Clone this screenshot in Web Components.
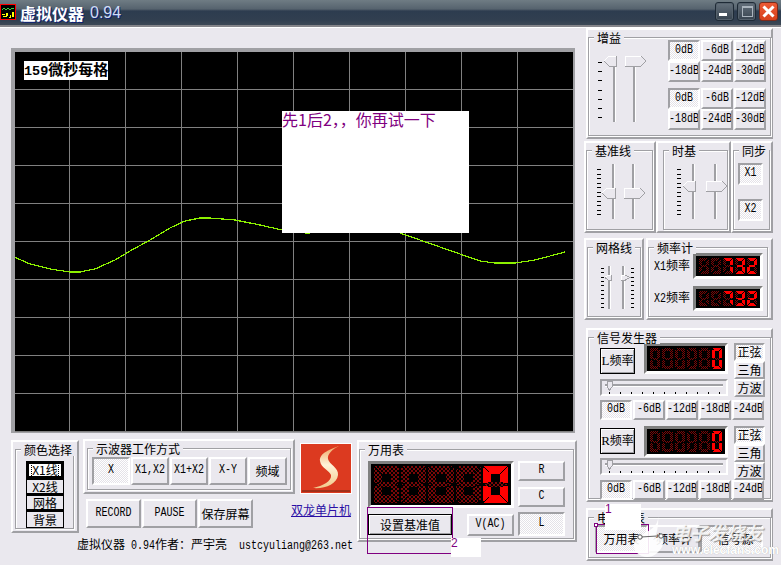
<!DOCTYPE html>
<html lang="zh">
<head>
<meta charset="utf-8">
<title>虚拟仪器 0.94</title>
<style>
  html, body { margin: 0; height: 100%; overflow: hidden; background: #eae8ee; }
  body { font: 12px/14px "Noto Sans CJK SC", "Liberation Sans", sans-serif; color: #000; }
  .row { display: flex; align-items: flex-start; }
  .col { display: flex; flex-direction: column; align-items: flex-start; }
  .m { font: 10px/14px "Liberation Mono", "Noto Sans CJK SC", monospace; display: inline-block; transform: scaleY(1.2); white-space: pre; }
  .main { display: flex; align-items: flex-start; padding-left: 11px; gap: 7px; }
  .left { width: 566px; padding-top: 21px; }
  .right { width: 191px; padding-top: 1px; }
  .footer { padding-left: 66px; line-height: 19px; white-space: pre; height: 19px; }
  .link { color: #2a0fa5; text-decoration: underline; margin: 9px 0 0 -9px; white-space: nowrap; font-size: 12px; }
  .freq-row { display: flex; align-items: center; }
  .freq-row span.lab { width: 39px; white-space: nowrap; }
  .gain { display: grid; grid-template-columns: repeat(3, 32px); grid-auto-rows: 21px; gap: 0 1px; }
</style>
</head>
<body>

<vi-window>
  <vi-title></vi-title>
  <div class="main">
    <div class="left col">
      <vi-scope></vi-scope>
      <div class="row" style="margin-top:6px;gap:4px">
        <div class="col">
          <div class="row" style="height:95px">
            <group-box label="颜色选择" style="width:68px;height:93px;margin-top:1px;--inset:0 3px 2px 2px;--pad:11px 0 0 10px;--dir:column">
              <vb-btn flat active cjk style="width:38px;height:17px">X1线</vb-btn>
              <vb-btn flat cjk style="width:38px;height:16px">X2线</vb-btn>
              <vb-btn flat cjk style="width:38px;height:16px">网格</vb-btn>
              <vb-btn flat cjk style="width:38px;height:18px">背景</vb-btn>
            </group-box>
            <div class="col" style="margin-left:4px;width:212px">
              <group-box label="示波器工作方式" style="width:212px;height:55px;--inset:0 2px 2px 2px;--pad:8px 0 0 4px;--gap:1px">
                <vb-btn active style="width:38px;height:28px">X</vb-btn>
                <vb-btn style="width:38px;height:28px">X1,X2</vb-btn>
                <vb-btn style="width:38px;height:28px">X1+X2</vb-btn>
                <vb-btn style="width:38px;height:28px">X-Y</vb-btn>
                <vb-btn cjk style="width:39px;height:28px">频域</vb-btn>
              </group-box>
              <div class="row" style="margin:5px 0 0 3px;gap:1px">
                <vb-btn style="width:55px;height:29px">RECORD</vb-btn>
                <vb-btn style="width:55px;height:29px">PAUSE</vb-btn>
                <vb-btn cjk style="width:55px;height:29px">保存屏幕</vb-btn>
              </div>
            </div>
            <div class="col" style="margin-left:5px;padding-top:4px">
              <vi-logo></vi-logo>
              <span class="link">双龙单片机</span>
            </div>
          </div>
          <div class="footer">虚拟仪器<span class="m"> 0.94</span>作者&#xFF1A;严宇亮<span class="m">  ustcyuliang@263.net</span></div>
        </div>
        <group-box label="万用表" style="width:220px;height:102px;margin-top:1px;--inset:0 1px 1px 0;--pad:11px 0 0 8px;--gap:4px">
          <div class="col" style="width:146px">
            <led-display text="    0" dot="2" style="width:146px;height:47px"></led-display>
            <div class="row" style="width:146px;justify-content:space-between;margin-top:6px">
              <vb-btn black cjk style="width:84px;height:21px">设置基准值</vb-btn>
              <vb-btn style="width:47px;height:22px">V(AC)</vb-btn>
            </div>
          </div>
          <div class="col" style="width:47px">
            <vb-btn style="width:47px;height:20px">R</vb-btn>
            <vb-btn style="width:47px;height:20px;margin-top:6px">C</vb-btn>
            <vb-btn active style="width:47px;height:24px;margin-top:5px">L</vb-btn>
          </div>
        </group-box>
      </div>
    </div>

    <div class="right col">
      <group-box label="增益" style="width:187px;height:111px;margin-left:2px;--pad:2px 0 0 9px">
        <v-slider w="18" h="66" track="16" thumbx="6" thumbw="12" thumby="0" dir="left" ticks="7" tick0="6" tick1="61" tracktop="10" style="margin-top:16px"></v-slider>
        <v-slider w="21" h="66" track="9" thumbx="0" thumbw="21" thumby="0" dir="right" tracktop="10" style="margin:16px 0 0 9px"></v-slider>
        <div class="col" style="margin-left:22px;gap:6px">
          <div class="gain">
            <vb-btn active>0dB</vb-btn><vb-btn>-6dB</vb-btn><vb-btn>-12dB</vb-btn>
            <vb-btn>-18dB</vb-btn><vb-btn>-24dB</vb-btn><vb-btn>-30dB</vb-btn>
          </div>
          <div class="gain">
            <vb-btn active>0dB</vb-btn><vb-btn>-6dB</vb-btn><vb-btn>-12dB</vb-btn>
            <vb-btn>-18dB</vb-btn><vb-btn>-24dB</vb-btn><vb-btn>-30dB</vb-btn>
          </div>
        </div>
      </group-box>

      <div class="row" style="margin-top:2px">
        <group-box label="基准线" style="width:72px;height:92px;--inset:0 1px 1px 0;--pad:13px 0 0 10px;--gap:9px">
          <v-slider w="18" h="55" track="16" thumbx="5" thumbw="13" thumby="24" dir="left" ticks="11" tick0="5" tick1="50"></v-slider>
          <v-slider w="21" h="55" track="9" thumbx="0" thumbw="21" thumby="24" dir="right"></v-slider>
        </group-box>
        <group-box label="时基" style="width:75px;height:92px;--inset:0 1px 1px 5px;--pad:13px 0 0 13px;--gap:11px">
          <v-slider w="18" h="55" track="16" thumbx="6" thumbw="12" thumby="17" dir="left" ticks="11" tick0="5" tick1="50"></v-slider>
          <v-slider w="21" h="55" track="9" thumbx="0" thumbw="21" thumby="17" dir="right"></v-slider>
        </group-box>
        <group-box label="同步" style="width:42px;height:92px;--inset:0 1px 1px 0;--pad:12px 0 0 4px;--dir:column;--gap:14px">
          <vb-btn active style="width:25px;height:22px">X1</vb-btn>
          <vb-btn active style="width:25px;height:22px">X2</vb-btn>
        </group-box>
      </div>

      <div class="row" style="margin-top:5px">
        <group-box label="网格线" style="width:60px;height:82px;--inset:0 1px 1px 1px;--pad:18px 0 0 13px;--gap:10px">
          <v-slider w="10" h="43" track="8" thumbx="4" thumbw="6" thumby="9" thumbh="5" dir="left" ticks="10" tick0="2" tick1="41" tickw="3"></v-slider>
          <v-slider w="13" h="43" track="2" thumbx="0" thumbw="9" thumby="9" thumbh="5" dir="right" ticks="10" tick0="2" tick1="41" tickx="10" tickw="3"></v-slider>
        </group-box>
        <group-box label="频率计" style="width:127px;height:82px;margin-left:2px;--inset:0 3px 1px 0;--pad:5px 0 0 5px;--dir:column;--gap:7px">
          <div class="freq-row"><span class="lab"><span class="m">X1</span>频率</span><led-display text="  732" style="width:70px;height:26px"></led-display></div>
          <div class="freq-row"><span class="lab"><span class="m">X2</span>频率</span><led-display text="  732" style="width:70px;height:25px"></led-display></div>
        </group-box>
      </div>

      <group-box label="信号发生器" style="width:187px;height:174px;margin:8px 0 0 2px;--pad:5px 0 0 11px;--dir:column;--gap:6px">
        <sig-channel name="L" style="--slider-gap:5px;--row-gap:3px;--label-top:5px"></sig-channel>
        <sig-channel name="R" style="--slider-gap:1px;--row-gap:0px;--label-top:2px"></sig-channel>
      </group-box>

      <group-box label="电子仪表" style="width:187px;height:53px;margin:6px 0 0 2px;--pad:7px 0 0 6px">
        <vb-btn active cjk style="width:53px;height:28px">万用表</vb-btn>
        <vb-btn cjk style="width:52px;height:28px">频率计</vb-btn>
        <vb-btn active cjk style="width:63px;height:28px;padding-left:8px">信号源</vb-btn>
      </group-box>
    </div>
  </div>
  <vi-overlay></vi-overlay>
</vi-window>

<script>
const PANEL = "#eae8ee";
const SHADE = "#a0a0a4";

class ViWindow extends HTMLElement {
  constructor() {
    super();
    this.attachShadow({ mode: "open" });
  }

  connectedCallback() {
    this.shadowRoot.innerHTML = `
    <style>
      :host { display: block; position: relative; width: 781px; height: 565px; background: ${PANEL}; overflow: hidden; }
    </style>
    <slot></slot>`;
  }
}

class ViTitle extends HTMLElement {
  constructor() {
    super();
    this.attachShadow({ mode: "open" });
  }

  connectedCallback() {
    this.shadowRoot.innerHTML = `
    <style>
      :host {
        display: flex; align-items: center; box-sizing: border-box; height: 27px;
        background: linear-gradient(#6f7c84 0, #56636e 9px, #2d3c4f 11px, #313f50 20px, #3d4956 25px);
        border-bottom: 2px solid #85858a;
        box-shadow: 0 1px 0 #fff;
      }
      svg { display: block; flex: none; }
      .name { margin-left: 4px; font: bold 16px/20px "Noto Sans CJK SC", sans-serif; color: #fff; text-shadow: 1px 1px 0 #0c2278; white-space: pre; }
      .ver { margin-left: 6px; font: 16px/20px "Liberation Sans", sans-serif; color: #cfdcf4; text-shadow: 1px 1px 0 #0c2278; }
      .btns { margin-left: auto; margin-right: 3px; display: flex; gap: 3px; margin-top: -2px; }
      .btn { width: 19px; height: 19px; box-sizing: border-box; border: 1px solid #1e2a36; border-radius: 3px; background: linear-gradient(#65717c, #37434f); box-shadow: inset 0 0 0 1px #56626d; }
      .close { border-color: #7c2a1a; background: linear-gradient(#ec5a35, #d8401a); box-shadow: none; }
    </style>
    <svg width="16" height="16" viewBox="0 0 16 16" style="margin-top:-1px" shape-rendering="crispEdges">
      <rect width="16" height="16" fill="#f00"/>
      <rect x="1" y="1" width="14" height="14" fill="#000"/>
      <path d="M1 6h2v-2h2v2h2v-2h2v2h2v-2h3v1H2z" fill="#3dd13d"/>
      <path d="M2 10h3v1H2zM6 9h2v3H6zM10 11h1v3h-1zM12 8h2v5h-2zM3 12h4v1H3zM9 13h2v1H9z" fill="#ff0"/>
    </svg>
    <span class="name">虚拟仪器</span><span class="ver">0.94</span>
    <div class="btns">
      <div class="btn"><svg width="17" height="17" shape-rendering="crispEdges"><rect x="3" y="10" width="8" height="3" fill="#fff"/></svg></div>
      <div class="btn"><svg width="17" height="17" shape-rendering="crispEdges"><rect x="4.5" y="3.5" width="10" height="10" fill="none" stroke="#aab4bd"/><rect x="4" y="3" width="11" height="2" fill="#aab4bd"/></svg></div>
      <div class="btn close"><svg width="17" height="17"><path d="M3.5 3.5l10 10M13.5 3.5l-10 10" stroke="#fff" stroke-width="3"/></svg></div>
    </div>`;
  }
}

class ViScope extends HTMLElement {
  constructor() {
    super();
    this.attachShadow({ mode: "open" });
  }

  static get left() {
    return "-1,205 15,212 35,217 55,220 65,220 80,217 100,208 115,199 135,188 155,176 170,169 185,166 195,166 220,168 245,173 267,178 295,181.5";
  }

  static get right() {
    return "385,181 405,188 425,195 445,202 465,209 480,211 500,211 520,208 550,200";
  }

  gridLines() {
    let lines = "";
    for (let x = 54; x < 558; x += 56) lines += `<path d="M${x + 0.5} 0V380"/>`;
    for (let y = 37; y < 380; y += 38) lines += `<path d="M0 ${y + 0.5}H558"/>`;
    return lines;
  }

  connectedCallback() {
    this.shadowRoot.innerHTML = `
    <style>
      :host {
        display: block; position: relative; box-sizing: content-box; width: 558px; height: 380px;
        border: solid ${SHADE}; border-width: 4px 2px 1px 4px; background: #000;
      }
      svg { display: block; }
      .tag { position: absolute; left: 9px; top: 9px; background: #fff; color: #000; font: bold 15px/16px "Noto Sans CJK SC", sans-serif; white-space: nowrap; }
      .tag b { font: bold 13.5px/16px "Liberation Mono", monospace; }
      .note { position: absolute; left: 267px; top: 59px; width: 187px; height: 122px; background: #fff; color: #800080; font: 16px/16px "Noto Sans CJK SC", sans-serif; white-space: nowrap; }
    </style>
    <svg width="558" height="380">
      <g stroke="#808080" stroke-width="1" shape-rendering="crispEdges">${this.gridLines()}</g>
      <polyline points="${ViScope.left}" fill="none" stroke="#8cf000" stroke-width="1.2" shape-rendering="crispEdges"/>
      <polyline points="${ViScope.right}" fill="none" stroke="#8cf000" stroke-width="1.2" shape-rendering="crispEdges"/>
    </svg>
    <div class="tag"><b>159</b>微秒每格</div>
    <div class="note">先1后2&#xFF0C;&#xFF0C;你再试一下</div>`;
  }
}

class GroupBox extends HTMLElement {
  constructor() {
    super();
    this.attachShadow({ mode: "open" });
  }

  connectedCallback() {
    this.shadowRoot.innerHTML = `
    <style>
      :host {
        display: flex; flex-direction: column; box-sizing: border-box; flex: none;
        border: 2px solid; border-color: #fff ${SHADE} ${SHADE} #fff;
        padding: var(--inset, 0 0 1px 0);
      }
      .frame {
        flex: 1; min-height: 0; position: relative; margin-top: 7px;
        border: 1px solid ${SHADE}; box-shadow: 1px 1px 0 #fff, inset 1px 1px 0 #fff;
      }
      .label {
        position: absolute; left: 5px; top: -7px; padding: 0 3px; background: ${PANEL};
        font: 12px/13px "Noto Sans CJK SC", sans-serif; white-space: nowrap;
      }
      .body {
        box-sizing: border-box; height: 100%; display: flex; align-items: flex-start;
        flex-direction: var(--dir, row); gap: var(--gap, 0); padding: var(--pad, 0);
      }
    </style>
    <div class="frame">
      <div class="label">${this.getAttribute("label")}</div>
      <div class="body"><slot></slot></div>
    </div>`;
  }
}

class VbBtn extends HTMLElement {
  constructor() {
    super();
    this.attachShadow({ mode: "open" });
  }

  connectedCallback() {
    this.shadowRoot.innerHTML = `
    <style>
      :host {
        display: flex; align-items: center; justify-content: center; box-sizing: border-box; flex: none;
        border: 2px solid; border-color: #fff ${SHADE} ${SHADE} #fff; background: ${PANEL};
        font: 10px/12px "Liberation Mono", "Noto Sans CJK SC", monospace; white-space: nowrap; overflow: hidden;
      }
      span { display: inline-block; transform: scaleY(1.2); }
      :host([cjk]) { font: 12px/14px "Noto Sans CJK SC", sans-serif; }
      :host([cjk]) span { transform: none; }
      :host([active]) {
        border-color: ${SHADE} #fff #fff ${SHADE};
        background: repeating-conic-gradient(#fff 0 25%, #e4e2e8 0 50%) 0 0 / 2px 2px;
      }
      :host([black]) { border: 1px solid #000; box-shadow: inset 1px 1px 0 #fff, inset -1px -1px 0 ${SHADE}; }
      :host([flat]) { border: 1px solid #000; border-top-width: 2px; background: ${PANEL}; }
      :host([flat][active]) { border-width: 3px 3px 2px; border-color: #000; background: #fff; }
      :host([flat][active]) span { outline: 1px dotted #000; outline-offset: 0; }
    </style>
    <span><slot></slot></span>`;
  }
}

class VSlider extends HTMLElement {
  constructor() {
    super();
    this.attachShadow({ mode: "open" });
  }

  num(name, fallback = 0) {
    return this.hasAttribute(name) ? Number(this.getAttribute(name)) : fallback;
  }

  thumb() {
    const x = this.num("thumbx");
    const y = this.num("thumby");
    const w = this.num("thumbw");
    const h = this.num("thumbh", 10);
    const tip = Math.min(5, w / 2);
    if (this.getAttribute("dir") === "left") {
      return `
        <polygon points="${x},${y + h / 2} ${x + tip},${y} ${x + w},${y} ${x + w},${y + h} ${x + tip},${y + h}" fill="${PANEL}"/>
        <polyline points="${x},${y + h / 2} ${x + tip},${y} ${x + w},${y}" fill="none" stroke="#fff"/>
        <polyline points="${x},${y + h / 2} ${x + tip},${y + h} ${x + w},${y + h} ${x + w},${y}" fill="none" stroke="${SHADE}"/>`;
    }
    return `
      <polygon points="${x},${y} ${x + w - tip},${y} ${x + w},${y + h / 2} ${x + w - tip},${y + h} ${x},${y + h}" fill="${PANEL}"/>
      <polyline points="${x},${y + h} ${x},${y} ${x + w - tip},${y}" fill="none" stroke="#fff"/>
      <polyline points="${x},${y + h} ${x + w - tip},${y + h} ${x + w},${y + h / 2} ${x + w - tip},${y}" fill="none" stroke="${SHADE}"/>`;
  }

  ticks() {
    const count = this.num("ticks");
    const x = this.num("tickx");
    const w = this.num("tickw", 4);
    const from = this.num("tick0");
    const to = this.num("tick1");
    let marks = "";
    for (let i = 0; i < count; i++) {
      const y = Math.round(from + (to - from) * i / (count - 1));
      marks += `<rect x="${x}" y="${y}" width="${w}" height="1" fill="#000"/>`;
    }
    return marks;
  }

  connectedCallback() {
    const w = this.num("w");
    const h = this.num("h");
    const track = this.num("track");
    const top = this.num("tracktop");
    this.shadowRoot.innerHTML = `
    <style>
      :host { display: block; flex: none; width: ${w}px; height: ${h + 1}px; }
      svg { display: block; overflow: visible; }
    </style>
    <svg width="${w}" height="${h + 1}" shape-rendering="crispEdges">
      ${this.ticks()}
      <rect x="${track - 1}" y="${top}" width="2" height="${h - top}" fill="${SHADE}"/>
      <rect x="${track + 1}" y="${top}" width="1" height="${h - top}" fill="#fff"/>
      ${this.thumb()}
    </svg>`;
  }
}

class HSlider extends HTMLElement {
  constructor() {
    super();
    this.attachShadow({ mode: "open" });
  }

  connectedCallback() {
    let ticks = "";
    for (let i = 0; i < 11; i++) ticks += `<rect x="${7 + i * 11}" y="11" width="1" height="3" fill="#000"/>`;
    this.shadowRoot.innerHTML = `
    <style>
      :host {
        display: block; box-sizing: border-box; width: 128px; height: 17px;
        border: 2px solid; border-color: ${SHADE} #fff #fff ${SHADE};
      }
      svg { display: block; }
    </style>
    <svg width="124" height="13" shape-rendering="crispEdges">
      <rect x="3" y="3" width="118" height="2" fill="${SHADE}"/>
      <rect x="3" y="5" width="118" height="1" fill="#fff"/>
      <polygon points="5,0 10,0 10,6 7.5,9 5,6" fill="${PANEL}" stroke="${SHADE}"/>
      ${ticks}
    </svg>`;
  }
}

const SEGMENTS = {
  " ": "", "0": "abcdef", "2": "abged", "3": "abcdg", "7": "abc"
};

class LedDisplay extends HTMLElement {
  constructor() {
    super();
    this.attachShadow({ mode: "open" });
  }

  digit(x, w, h, lit) {
    const t = Math.max(3, Math.round(w * 0.3));
    const m = h / 2;
    const shapes = {
      a: [[x + 1, 0], [x + w - 1, 0], [x + w - t, t], [x + t, t]],
      b: [[x + w, 1], [x + w, m - 1], [x + w - t, m - t / 3], [x + w - t, t]],
      c: [[x + w, m + 1], [x + w, h - 1], [x + w - t, h - t], [x + w - t, m + t / 3]],
      d: [[x + 1, h], [x + w - 1, h], [x + w - t, h - t], [x + t, h - t]],
      e: [[x, m + 1], [x, h - 1], [x + t, h - t], [x + t, m + t / 3]],
      f: [[x, 1], [x, m - 1], [x + t, m - t / 3], [x + t, t]],
      g: [[x + 1, m], [x + t, m - t / 3], [x + w - t, m - t / 3], [x + w - 1, m], [x + w - t, m + t / 3], [x + t, m + t / 3]]
    };
    return Object.keys(shapes).map(name => {
      const fill = lit.includes(name) ? "#ff0000" : "url(#dim)";
      return `<polygon points="${shapes[name].join(" ")}" fill="${fill}"/>`;
    }).join("");
  }

  connectedCallback() {
    const text = this.getAttribute("text");
    const dot = Number(this.getAttribute("dot") || 1);
    const width = parseInt(this.style.width) - 6;
    const height = parseInt(this.style.height) - 6;
    const pad = 2;
    const cell = (width - pad * 2) / text.length;
    const digits = [...text].map((ch, i) => this.digit(pad + i * cell + 1, cell - 2, height - pad * 2, SEGMENTS[ch] || "")).join("");
    this.shadowRoot.innerHTML = `
    <style>
      :host {
        display: block; box-sizing: border-box; flex: none;
        border: 3px solid; border-color: #808080 #fff #fff #808080; background: #000;
      }
      svg { display: block; }
    </style>
    <svg width="${width}" height="${height}" shape-rendering="crispEdges" role="img" aria-label="${text.trim()}">
      <defs>
        <pattern id="dim" width="${dot * 2}" height="${dot * 2}" patternUnits="userSpaceOnUse">
          <rect width="${dot}" height="${dot}" fill="#7a0808"/><rect x="${dot}" y="${dot}" width="${dot}" height="${dot}" fill="#7a0808"/>
        </pattern>
      </defs>
      <g transform="translate(0 ${pad})">${digits}</g>
    </svg>`;
  }
}

class SigChannel extends HTMLElement {
  constructor() {
    super();
    this.attachShadow({ mode: "open" });
  }

  connectedCallback() {
    this.shadowRoot.innerHTML = `
    <style>
      :host { display: block; width: 165px; }
      .top { display: flex; align-items: flex-start; }
      .main { width: 128px; display: flex; flex-direction: column; gap: var(--slider-gap, 5px); }
      .readout { display: flex; align-items: flex-start; }
      .side { margin-left: 6px; display: flex; flex-direction: column; }
      .levels { display: grid; grid-template-columns: repeat(5, 32px); gap: 1px; margin-top: var(--row-gap, 3px); }
      vb-btn.freq { width: 35px; height: 26px; margin: var(--label-top, 5px) 9px 0 0; }
      vb-btn.side-btn { width: 31px; height: 18px; }
      vb-btn.level { height: 20px; }
      .ch { font: 13px "Liberation Serif", serif; }
    </style>
    <div class="top">
      <div class="main">
        <div class="readout">
          <vb-btn class="freq" black cjk><span class="ch">${this.getAttribute("name")}</span>频率</vb-btn>
          <led-display text="     0" style="width:84px;height:31px"></led-display>
        </div>
        <h-slider></h-slider>
      </div>
      <div class="side">
        <vb-btn class="side-btn" cjk active>正弦</vb-btn>
        <vb-btn class="side-btn" cjk>三角</vb-btn>
        <vb-btn class="side-btn" cjk>方波</vb-btn>
      </div>
    </div>
    <div class="levels">
      <vb-btn class="level" active>0dB</vb-btn>
      <vb-btn class="level">-6dB</vb-btn>
      <vb-btn class="level">-12dB</vb-btn>
      <vb-btn class="level">-18dB</vb-btn>
      <vb-btn class="level">-24dB</vb-btn>
    </div>`;
  }
}

class ViLogo extends HTMLElement {
  constructor() {
    super();
    this.attachShadow({ mode: "open" });
  }

  connectedCallback() {
    this.shadowRoot.innerHTML = `
    <style>
      :host { display: block; width: 52px; height: 51px; box-sizing: border-box; border: 1px solid #fff; background: #dc3a20; }
      svg { display: block; }
    </style>
    <svg width="50" height="49" viewBox="0 0 50 49">
      <defs>
        <linearGradient id="s" x1="0" y1="0" x2="0" y2="1">
          <stop offset="0" stop-color="#eea560"/><stop offset=".45" stop-color="#fff3d8"/><stop offset="1" stop-color="#f2c98a"/>
        </linearGradient>
      </defs>
      <path d="M38 2C30 5 18 9 19 17 20 24 28 26 30 31 31 37 22 42 12 44 24 45 36 40 37 31 38 24 28 20 27 15 26 10 32 5 38 2z" fill="url(#s)"/>
      <rect x="1" y="46" width="48" height="2" fill="#7a2a18" opacity=".6"/>
    </svg>`;
  }
}

class ViOverlay extends HTMLElement {
  constructor() {
    super();
    this.attachShadow({ mode: "open" });
  }

  connectedCallback() {
    this.shadowRoot.innerHTML = `
    <style>
      :host { display: block; position: absolute; inset: 0; pointer-events: none; }
      .box { position: absolute; box-sizing: border-box; }
      .sel { border: 1px solid #800080; }
      .tag { background: #fff; color: #800080; font: 12px/11px "Liberation Sans", sans-serif; }
      .mark { position: absolute; left: 633px; top: 514px; }
      .brand { position: absolute; left: 672px; top: 520px; font: italic bold 18px/24px "Noto Sans CJK SC", sans-serif; color: rgba(255,255,255,.85); text-shadow: 1px 1px 1px rgba(110,110,110,.7); white-space: nowrap; }
      .site { position: absolute; left: 672px; top: 544px; font: bold 12px/12px "Liberation Sans", sans-serif; color: #fff; text-shadow: 0 0 1px #aaa; white-space: nowrap; }
    </style>
    <div class="box sel" style="left:367px;top:507px;width:86px;height:47px"></div>
    <div class="box tag" style="left:451px;top:538px;width:30px;height:19px">2</div>
    <div class="box sel" style="left:596px;top:524px;width:53px;height:30px"></div>
    <div class="box" style="left:594px;top:523px;width:4px;height:4px;border:1px solid #800080;background:#fff"></div>
    <div class="box tag" style="left:605px;top:504px;width:36px;height:26px">1</div>
    <svg class="mark" width="32" height="44" viewBox="0 0 32 44">
      <path d="M25 0c1 7-2 12-8 16-6 4-15 7-16 14-1 7 6 13 13 13 7 0 12-5 15-10 2-5 2-9-1-13-3 3-5 5-8 6 4-5 6-15 5-26z" fill="#fff" opacity=".9"/>
      <path d="M8 23l16-1" stroke="#666" stroke-width="1"/>
      <circle cx="7" cy="23" r="2.2" fill="#fff" stroke="#555"/>
      <circle cx="28" cy="22" r="2.2" fill="#fff" stroke="#555"/>
    </svg>
    <div class="brand">电子发烧友</div>
    <div class="site">www.elecfans.com</div>`;
  }
}

customElements.define("group-box", GroupBox);
customElements.define("vb-btn", VbBtn);
customElements.define("v-slider", VSlider);
customElements.define("h-slider", HSlider);
customElements.define("led-display", LedDisplay);
customElements.define("sig-channel", SigChannel);
customElements.define("vi-logo", ViLogo);
customElements.define("vi-scope", ViScope);
customElements.define("vi-title", ViTitle);
customElements.define("vi-overlay", ViOverlay);
customElements.define("vi-window", ViWindow);
</script>
</body>
</html>
